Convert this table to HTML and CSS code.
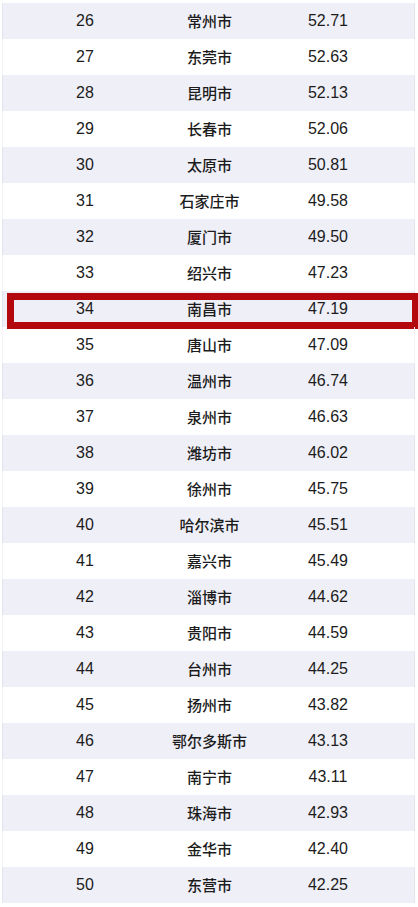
FILE: index.html
```html
<!DOCTYPE html>
<html lang="zh-CN">
<head>
<meta charset="utf-8">
<title>城市排名</title>
<link rel="stylesheet" href="styles.css">
</head>
<body>
<div class="table">
  <div class="row"><span>26</span><span>常州市</span><span>52.71</span></div>
  <div class="row"><span>27</span><span>东莞市</span><span>52.63</span></div>
  <div class="row"><span>28</span><span>昆明市</span><span>52.13</span></div>
  <div class="row"><span>29</span><span>长春市</span><span>52.06</span></div>
  <div class="row"><span>30</span><span>太原市</span><span>50.81</span></div>
  <div class="row"><span>31</span><span>石家庄市</span><span>49.58</span></div>
  <div class="row"><span>32</span><span>厦门市</span><span>49.50</span></div>
  <div class="row"><span>33</span><span>绍兴市</span><span>47.23</span></div>
  <div class="row highlight"><span>34</span><span>南昌市</span><span>47.19</span></div>
  <div class="row"><span>35</span><span>唐山市</span><span>47.09</span></div>
  <div class="row"><span>36</span><span>温州市</span><span>46.74</span></div>
  <div class="row"><span>37</span><span>泉州市</span><span>46.63</span></div>
  <div class="row"><span>38</span><span>潍坊市</span><span>46.02</span></div>
  <div class="row"><span>39</span><span>徐州市</span><span>45.75</span></div>
  <div class="row"><span>40</span><span>哈尔滨市</span><span>45.51</span></div>
  <div class="row"><span>41</span><span>嘉兴市</span><span>45.49</span></div>
  <div class="row"><span>42</span><span>淄博市</span><span>44.62</span></div>
  <div class="row"><span>43</span><span>贵阳市</span><span>44.59</span></div>
  <div class="row"><span>44</span><span>台州市</span><span>44.25</span></div>
  <div class="row"><span>45</span><span>扬州市</span><span>43.82</span></div>
  <div class="row"><span>46</span><span>鄂尔多斯市</span><span>43.13</span></div>
  <div class="row"><span>47</span><span>南宁市</span><span>43.11</span></div>
  <div class="row"><span>48</span><span>珠海市</span><span>42.93</span></div>
  <div class="row"><span>49</span><span>金华市</span><span>42.40</span></div>
  <div class="row"><span>50</span><span>东营市</span><span>42.25</span></div>
</div>
</body>
</html>
```
FILE: styles.css
```css
html, body {
  margin: 0;
  padding: 0;
  background: #ffffff;
  overflow: hidden;
}

body {
  width: 418px;
  height: 907px;
  font-family: "Liberation Sans", "Noto Sans CJK SC", sans-serif;
  font-size: 16px;
  color: #1c1c1c;
}

.table {
  margin: 3px 0 0 2px;
  width: 413px;
  display: flex;
  flex-direction: column;
}

.row {
  position: relative;
  height: 36px;
  display: grid;
  grid-template-columns: 164px 85px 152px 12px;
  align-items: center;
  box-sizing: border-box;
  border-left: 1px solid #f4f4f8;
  border-right: 1px solid #f4f4f8;
}

.row:nth-child(odd) {
  background: #efeff7;
  border-left-color: #e4e4ee;
  border-right-color: #e4e4ee;
}

.row span {
  text-align: center;
  line-height: 36px;
  white-space: nowrap;
}

.row span:nth-child(2) {
  font-family: "Noto Sans CJK SC", sans-serif;
  font-size: 15px;
  font-weight: 500;
}

.highlight::after {
  content: "";
  position: absolute;
  top: 2px;
  left: 4px;
  width: 412px;
  height: 36px;
  box-sizing: border-box;
  border: 7px solid #b3080e;
  pointer-events: none;
}
```
